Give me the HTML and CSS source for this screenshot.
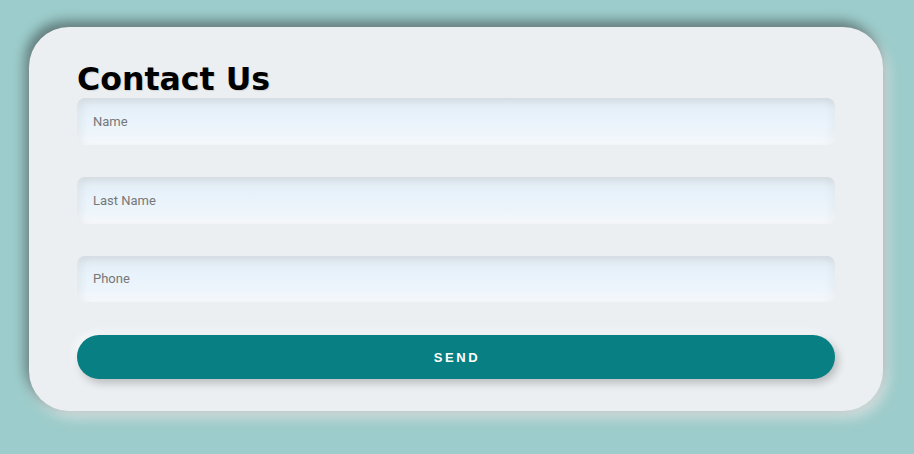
FILE: index.html
```html
<!DOCTYPE html>
<html>
<head>
<meta charset="utf-8">
<link rel="stylesheet" href="styles.css">
</head>
<body>
<div class="page">
  <form class="card">
    <h1 class="title">Contact Us</h1>
    <input class="field" type="text" placeholder="Name">
    <input class="field" type="text" placeholder="Last Name">
    <input class="field" type="text" placeholder="Phone">
    <button class="send" type="button">SEND</button>
  </form>
</div>
</body>
</html>
```

FILE: styles.css
```css
html, body {
  margin: 0;
  padding: 0;
  background: #9ccccb;
}
.page {
  width: 914px;
  height: 454px;
  padding: 27px 0 0 29px;
  box-sizing: border-box;
}
.card {
  width: 854px;
  height: 384px;
  box-sizing: border-box;
  background: #ebeff2;
  border-radius: 40px;
  padding: 34px 48px 32px 48px;
  display: flex;
  flex-direction: column;
  box-shadow: -4px -6px 12px rgba(0, 0, 0, 0.4), 4px 6px 14px rgba(225, 225, 225, 0.9);
}
.title {
  margin: 0;
  font-family: "DejaVu Sans", Verdana, sans-serif;
  font-weight: bold;
  font-size: 31.6px;
  line-height: 37px;
  height: 37px;
  color: #000;
  text-shadow: 1px 1px 1px rgba(0, 0, 0, 0.12);
}
.field {
  display: block;
  width: 758px;
  height: 47px;
  box-sizing: border-box;
  border: none;
  outline: none;
  border-radius: 8px;
  padding: 0 16px;
  margin-bottom: 32px;
  font-family: Roboto, "Liberation Sans", Arial, sans-serif;
  font-size: 13px;
  color: #333;
  background: linear-gradient(#e3ecf3 0%, #e9f3fb 45%, #f2f7fc 100%);
  box-shadow: inset 4px 4px 8px rgba(0, 0, 0, 0.06), inset -4px 0 8px rgba(0, 0, 0, 0.04), inset 0 -4px 6px rgba(255, 255, 255, 0.6);
}
.field::placeholder {
  color: #777777;
}
.field:nth-of-type(3) {
  margin-bottom: 33px;
}
.send {
  display: block;
  width: 758px;
  height: 44px;
  border: none;
  border-radius: 22px;
  background: #077f83;
  color: #fff;
  font-family: "Liberation Sans", Arial, sans-serif;
  font-weight: bold;
  font-size: 13px;
  letter-spacing: 2.6px;
  padding: 0 0 0 2px;
  box-shadow: 3px 4px 8px rgba(0, 0, 0, 0.22), -3px -3px 8px rgba(255, 255, 255, 0.7);
}
```
